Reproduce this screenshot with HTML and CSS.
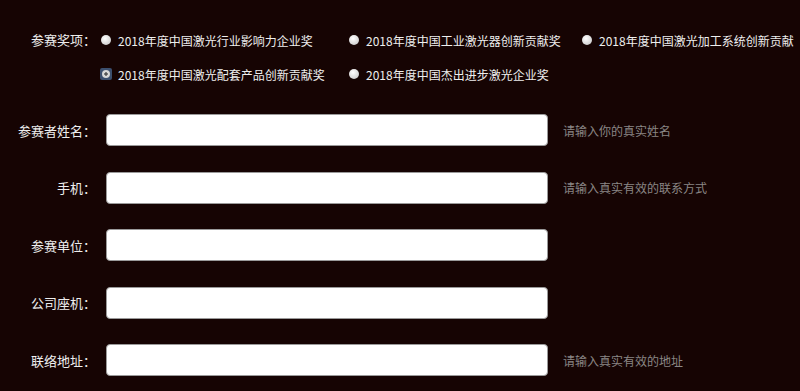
FILE: index.html
```html
<!DOCTYPE html>
<html lang="zh-CN">
<head>
    <meta charset="UTF-8">
    <meta name="viewport" content="width=device-width, initial-scale=1.0">
    <title>参赛报名</title>
    <link rel="stylesheet" href="styles.css">
</head>
<body>
    <form class="apply-form">
        <div class="award-row">
            <span class="label">参赛奖项：</span>
            <div class="options">
                <label class="option"><input type="radio" name="award"> 2018年度中国激光行业影响力企业奖</label>
                <label class="option"><input type="radio" name="award"> 2018年度中国工业激光器创新贡献奖</label>
                <label class="option"><input type="radio" name="award"> 2018年度中国激光加工系统创新贡献</label>
                <label class="option"><input type="radio" name="award" class="focused" checked> 2018年度中国激光配套产品创新贡献奖</label>
                <label class="option"><input type="radio" name="award"> 2018年度中国杰出进步激光企业奖</label>
            </div>
        </div>

        <div class="field">
            <label class="label" for="name">参赛者姓名：</label>
            <input type="text" id="name" class="text-input">
            <span class="hint">请输入你的真实姓名</span>
        </div>
        <div class="field">
            <label class="label" for="phone">手机：</label>
            <input type="text" id="phone" class="text-input">
            <span class="hint">请输入真实有效的联系方式</span>
        </div>
        <div class="field">
            <label class="label" for="company">参赛单位：</label>
            <input type="text" id="company" class="text-input">
        </div>
        <div class="field">
            <label class="label" for="tel">公司座机：</label>
            <input type="text" id="tel" class="text-input">
        </div>
        <div class="field">
            <label class="label" for="address">联络地址：</label>
            <input type="text" id="address" class="text-input">
            <span class="hint">请输入真实有效的地址</span>
        </div>
    </form>
</body>
</html>
```

FILE: styles.css
```css
body {
    margin: 0;
    background-color: #160403;
    color: #eee;
    font-family: "Microsoft YaHei", "Noto Sans CJK SC", sans-serif;
    font-size: 13px;
}

.apply-form {
    padding-top: 23px;
}

.label {
    width: 96px;
    flex-shrink: 0;
    text-align: right;
    font-size: 13px;
    color: #eee;
}

.award-row {
    display: flex;
    align-items: flex-start;
    margin-bottom: 23px;
}

.award-row .label {
    line-height: 34px;
}

.options {
    display: grid;
    grid-template-columns: 248px 233px auto;
    margin-left: 5px;
}

.option {
    display: flex;
    align-items: center;
    height: 34px;
    font-size: 12px;
    white-space: nowrap;
    cursor: pointer;
}

.option input {
    appearance: none;
    -webkit-appearance: none;
    width: 10px;
    height: 10px;
    margin: 0 7px 0 0;
    border-radius: 50%;
    background: radial-gradient(circle at 40% 35%, #fff, #d4d4d4 70%, #b8b8b8);
    box-sizing: border-box;
    position: relative;
}

.option input.focused {
    width: 12px;
    height: 12px;
    margin-left: -1px;
    margin-right: 6px;
    border-radius: 2px;
    background: #3c4f6e;
}

.option input.focused::after {
    content: "";
    position: absolute;
    left: 2px;
    top: 2px;
    width: 8px;
    height: 8px;
    border-radius: 50%;
    background: radial-gradient(circle, #555 0, #555 25%, #ddd 35%, #c8c8c8 100%);
}

.field {
    display: flex;
    align-items: center;
    margin-bottom: 25.5px;
}

.text-input {
    width: 442px;
    height: 32px;
    margin: 0 0 0 10px;
    padding: 0 8px;
    border: 1px solid #9a9a9a;
    border-radius: 4px;
    background-color: #fff;
    box-sizing: border-box;
    font-size: 13px;
}

.hint {
    margin-left: 15px;
    color: #8a8685;
    font-size: 12px;
}
```
